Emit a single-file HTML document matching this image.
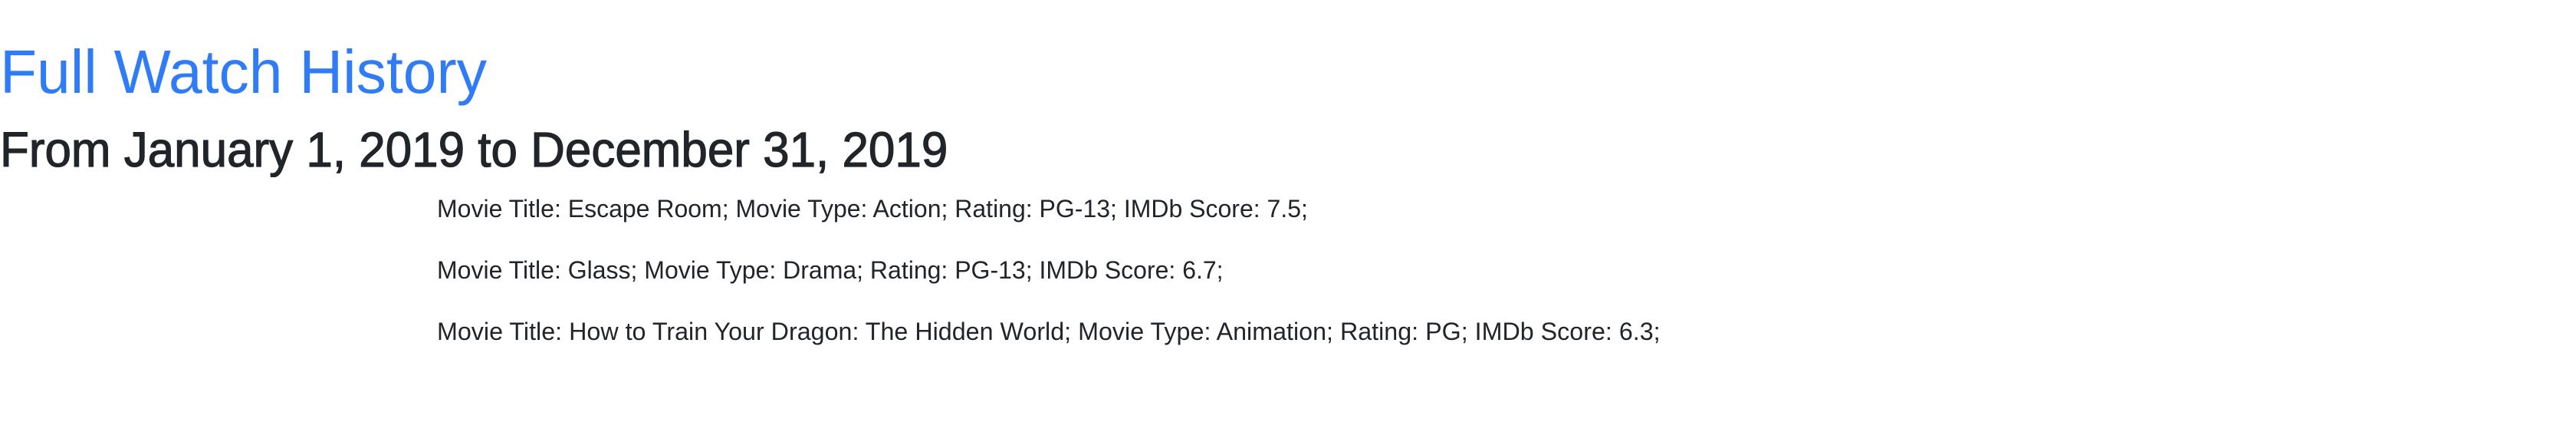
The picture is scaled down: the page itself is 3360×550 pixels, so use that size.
<!DOCTYPE html>
<html><head><meta charset="utf-8"><style>
html,body{margin:0;padding:0;background:#fff;width:3360px;height:550px;overflow:hidden;}
body{font-family:"Liberation Sans",Arial,sans-serif;color:#212529;position:relative;}
.a{position:absolute;white-space:nowrap;margin:0;transform-origin:0 0;}
h1{font-size:80px;line-height:96px;font-weight:400;color:#2f7cf6;left:0;top:46px;transform:scaleX(0.983);}
h2{font-size:64px;line-height:76.8px;font-weight:400;left:0;top:157px;transform:scaleX(0.968);-webkit-text-stroke:1.2px #212529;}
p{font-size:32px;line-height:48px;left:570px;}
</style></head><body>
<h1 class="a">Full Watch History</h1>
<h2 class="a">From January 1, 2019 to December 31, 2019</h2>
<p class="a" style="top:248px">Movie Title: Escape Room; Movie Type: Action; Rating: PG-13; IMDb Score: 7.5;</p>
<p class="a" style="top:328px">Movie Title: Glass; Movie Type: Drama; Rating: PG-13; IMDb Score: 6.7;</p>
<p class="a" style="top:408px;transform:scaleX(1.008)">Movie Title: How to Train Your Dragon: The Hidden World; Movie Type: Animation; Rating: PG; IMDb Score: 6.3;</p>
</body></html>
